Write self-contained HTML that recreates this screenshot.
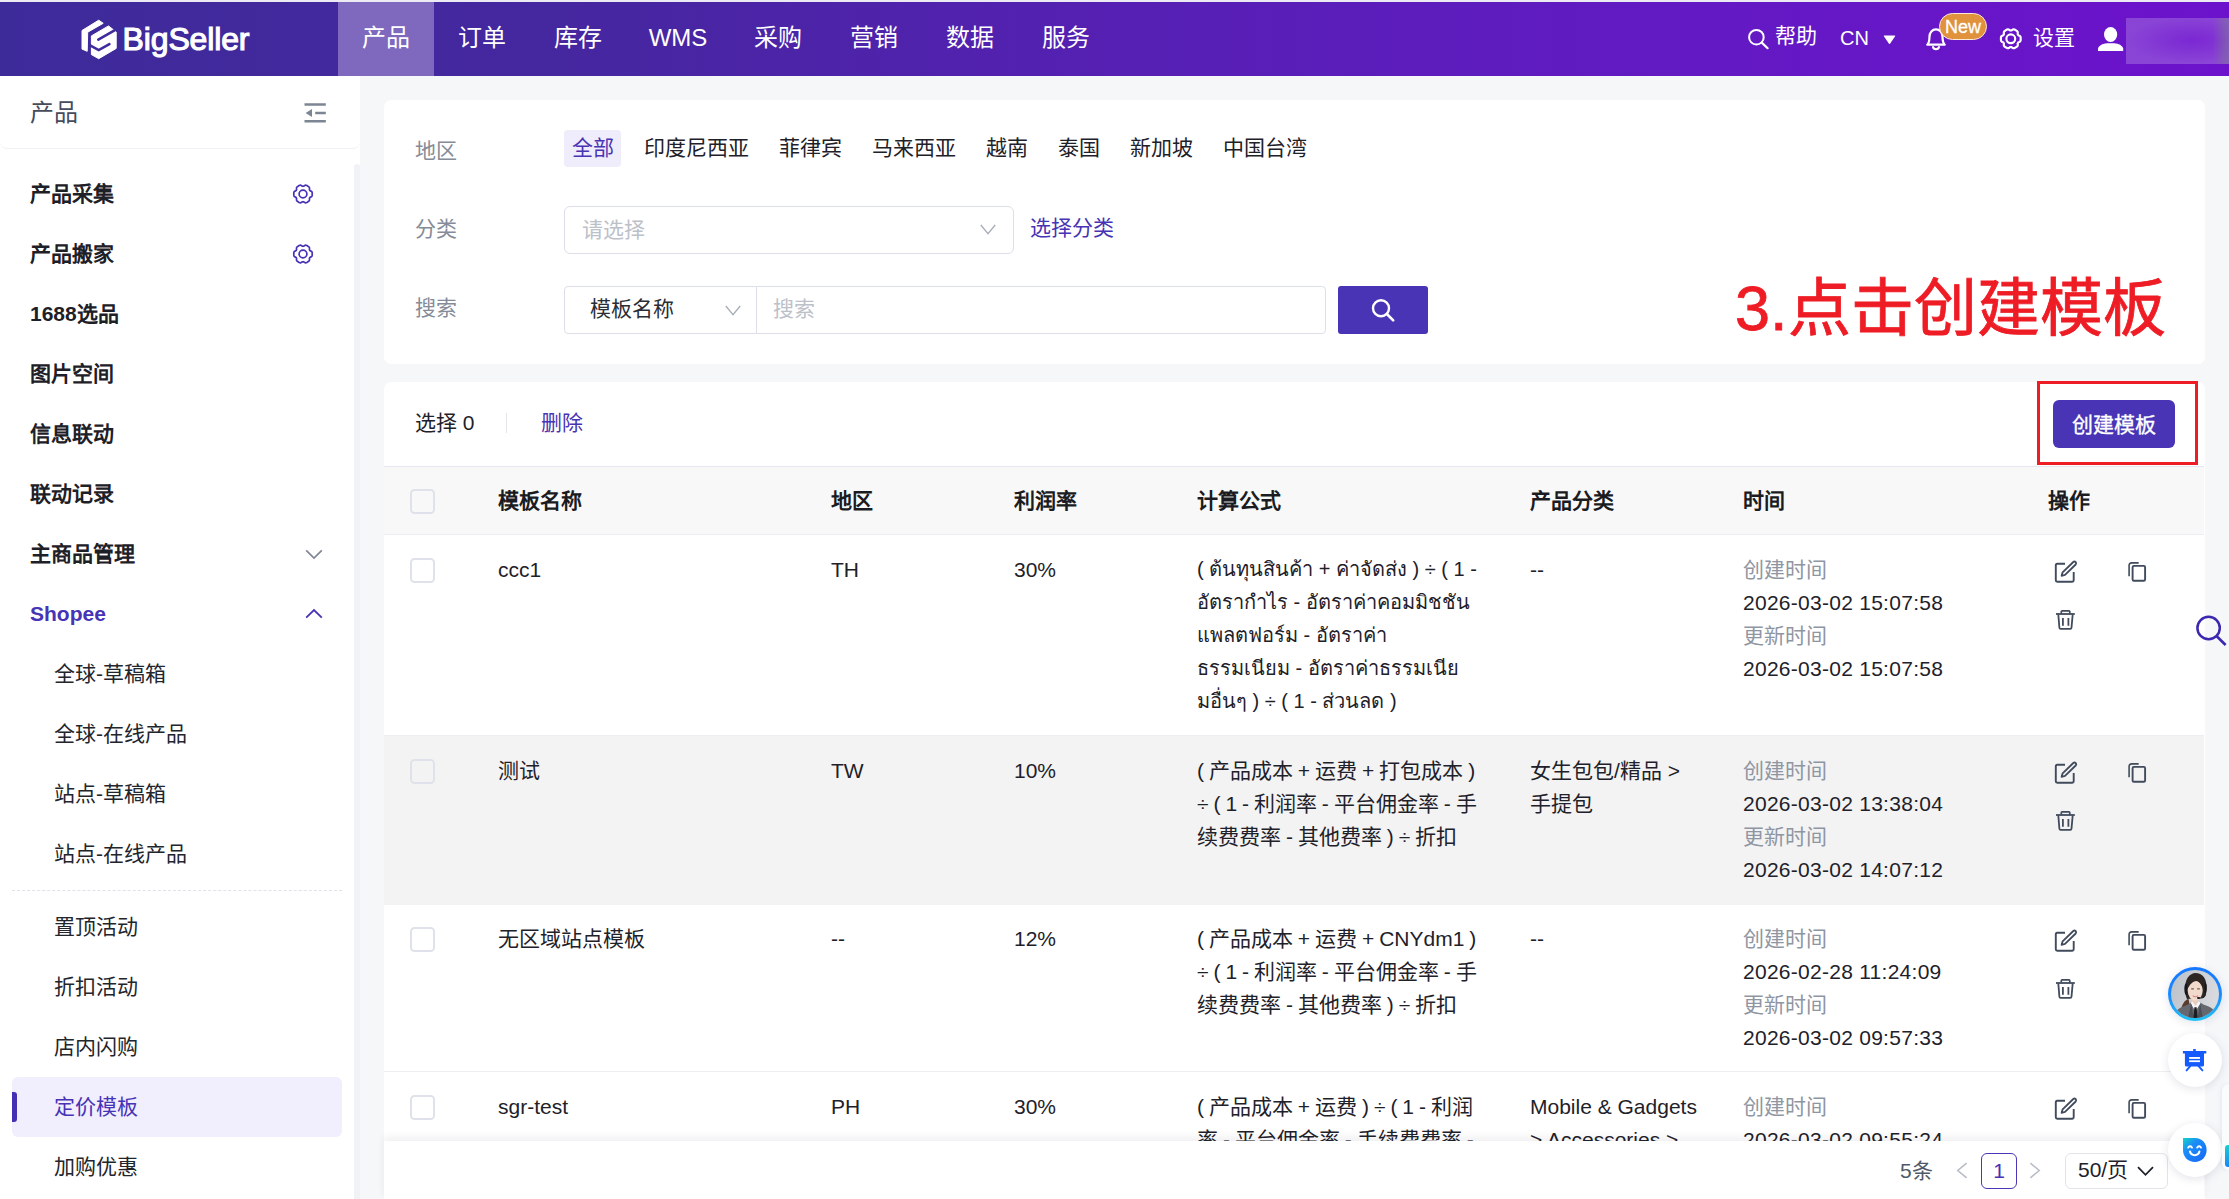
<!DOCTYPE html>
<html lang="zh-CN">
<head>
<meta charset="utf-8">
<title>BigSeller - 定价模板</title>
<style>
*{box-sizing:border-box;margin:0;padding:0}
html,body{width:2229px;height:1199px;overflow:hidden}
body{position:relative;background:#f6f7f9;font-family:"Liberation Sans",sans-serif;font-size:21px;color:#1e2129;line-height:33px}
.abs{position:absolute}
svg{display:block;overflow:visible}
a{text-decoration:none;color:inherit}
ul{list-style:none}

/* ---------- top header ---------- */
#topstrip{position:absolute;left:0;top:0;width:2229px;height:2px;background:#eceaf3}
#hdr{position:absolute;left:0;top:2px;width:2229px;height:74px;background:linear-gradient(90deg,#3e2b9a 0%,#45279f 25%,#5520b3 50%,#621ac3 75%,#6c12cc 100%);color:#fff}
#logo{position:absolute;left:81px;top:17px;width:36px;height:40px}
#logotxt{position:absolute;left:122.6px;top:15.3px;font-size:32px;line-height:44px;letter-spacing:-0.15px;-webkit-text-stroke:1.15px #fff;white-space:nowrap}
#nav a{position:absolute;top:0;height:74px;line-height:72px;font-size:24px;text-align:center;white-space:nowrap;color:#fff}
#nav a.on{background:#7e69be}
.hr{position:absolute;white-space:nowrap;color:#fff;font-size:21px;line-height:30px}

/* ---------- sidebar ---------- */
#side{position:absolute;left:0;top:76px;width:360px;height:1123px;background:#fff}
#sidetrack{position:absolute;left:353.6px;top:164px;width:6.4px;height:1035px;background:#f1f2f5;border-radius:3px 3px 0 0}
#sidehd{position:absolute;left:0;top:76px;width:360px;height:72.5px;background:#fff;border-bottom:1.5px solid #eff1f5;border-radius:0 0 7px 7px}
#sidehd span{position:absolute;left:30px;top:20px;font-size:24px;line-height:34px;color:#464c5b}
.mi{position:absolute;left:30px;font-size:21px;line-height:30px;font-weight:700;color:#1d2027;white-space:nowrap}
.si{position:absolute;left:54px;font-size:21px;line-height:30px;color:#22252c;white-space:nowrap}

/* ---------- panels ---------- */
.panel{position:absolute;left:384px;width:1821px;background:#fff;border-radius:7px}
.lbl{position:absolute;left:31px;font-size:21px;line-height:30px;color:#858b98;white-space:nowrap}
.chip{position:absolute;top:30px;height:37px;line-height:35px;padding:0 7.5px;border-radius:4px;font-size:21px;color:#1e2129;white-space:nowrap}
.chip.on{background:#efecfb;color:#4733b3}
.ibox{position:absolute;height:48px;border:1px solid #dcdfe8;background:#fff;font-size:21px;line-height:46px;white-space:nowrap}
.ph{color:#bcc0c9}

/* ---------- table ---------- */
#tb{position:absolute;left:0;top:84px;width:1820px}
.th{position:absolute;left:0;top:0;width:1820px;height:69px;background:#f8f8f9;border-top:1px solid #e5e7ee;border-bottom:1px solid #eceef1}
.th b{position:absolute;top:19px;font-size:21px;line-height:30px;font-weight:700;color:#1a1c22;white-space:nowrap}
.tr{position:absolute;left:0;width:1820px;border-bottom:1px solid #eceef1;overflow:hidden}
.tr.hov{background:#f3f3f3;border-bottom-color:#f3f3f3}
.td{position:absolute;top:18px;font-size:21px;line-height:33px;white-space:nowrap;color:#1e2129}
.td i{font-style:normal;color:#8f96a3;letter-spacing:0}
.tm{letter-spacing:0.27px}
.cb{position:absolute;left:26px;width:24.5px;height:24.5px;border:2px solid #dfe2ea;border-radius:4.5px;background:transparent}
.ic{position:absolute}
#foot{position:absolute;left:384px;top:1141px;width:1820px;height:58px;background:#fff;box-shadow:0 -4px 8px rgba(40,45,70,.07)}
.fl{position:absolute;border-radius:50%;background:#fff;box-shadow:0 2px 10px rgba(40,50,90,.13)}
</style>
</head>
<body>

<div id="topstrip"></div>

<!-- ================= HEADER ================= -->
<div id="hdr">
  <svg id="logo" viewBox="0 0 36 40">
    <path d="M17.7 1.2 L1 11.5 V30.1 L6.2 32.3 L6.7 13.2 L22.2 4.3 Z" fill="#fff" stroke="#fff" stroke-width="1" stroke-linejoin="round"/>
    <path d="M27.5 6.9 L10.4 16.9 V35.6 L17.7 39.7 L35.2 29.4 V13 Z" fill="#fff" stroke="#fff" stroke-width="1" stroke-linejoin="round"/>
    <path d="M37 9.4 L17.3 20.7" stroke="#3f2b9b" stroke-width="2.6" stroke-linecap="round" fill="none"/>
    <path d="M8.6 26.1 L17.7 31.1 L28.4 25.2" stroke="#3f2b9b" stroke-width="2.6" stroke-linecap="round" stroke-linejoin="miter" fill="none"/>
  </svg>
  <div id="logotxt">BigSeller</div>

  <div id="nav">
    <a class="on" style="left:338px;width:96px">产品</a>
    <a style="left:434px;width:96px">订单</a>
    <a style="left:530px;width:96px">库存</a>
    <a style="left:626px;width:104px">WMS</a>
    <a style="left:730px;width:96px">采购</a>
    <a style="left:826px;width:96px">营销</a>
    <a style="left:922px;width:96px">数据</a>
    <a style="left:1018px;width:96px">服务</a>
  </div>

  <!-- right tools -->
  <svg class="abs" style="left:1746px;top:25px" width="24" height="24" viewBox="0 0 24 24"><circle cx="10.4" cy="10.2" r="7.3" fill="none" stroke="#fff" stroke-width="2"/><path d="M15.8 15.6 L21.6 21.2" stroke="#fff" stroke-width="2.2" stroke-linecap="round"/></svg>
  <div class="hr" style="left:1775px;top:19px">帮助</div>
  <div class="hr" style="left:1840px;top:21px;font-size:20px">CN</div>
  <svg class="abs" style="left:1883px;top:32.6px" width="13" height="10" viewBox="0 0 13 10"><path d="M1.2 0.6 H11.8 Q12.6 0.8 12 1.6 L7 8.8 Q6.5 9.4 6 8.8 L1 1.6 Q0.4 0.8 1.2 0.6 Z" fill="#fff"/></svg>
  <svg class="abs" style="left:1924px;top:24.5px" width="24" height="24" viewBox="0 0 22 22"><path d="M3 16.2 H19 C17.3 14.6 17 13 17 9.2 C17 5 14.4 2.2 11 2.2 C7.6 2.2 5 5 5 9.2 C5 13 4.7 14.6 3 16.2 Z" fill="none" stroke="#fff" stroke-width="2" stroke-linejoin="round"/><path d="M8.3 18.4 C8.8 21 13.2 21 13.7 18.4" fill="none" stroke="#fff" stroke-width="2" stroke-linecap="round"/></svg>
  <div class="abs" style="left:1939px;top:11px;width:48px;height:27px;border-radius:14px;background:#e0923c;border:1px solid #fbe9d6;color:#fff;font-size:18px;line-height:27px;text-align:center;-webkit-text-stroke:0.3px #fff">New</div>
  <svg class="abs" id="hgear" style="left:1999px;top:25px" width="23.6" height="23.6" viewBox="-11 -11 22 22"><path d="M9.2 -0.0L9.2 -0.4L9.2 -0.8L9.2 -1.2L9.1 -1.6L9.0 -2.0L8.8 -2.3L8.4 -2.7L8.0 -2.9L7.5 -3.1L7.1 -3.3L6.8 -3.6L6.7 -3.9L6.5 -4.1L6.4 -4.5L6.5 -5.0L6.5 -5.5L6.5 -6.0L6.4 -6.4L6.2 -6.8L6.0 -7.1L5.6 -7.3L5.3 -7.6L4.9 -7.8L4.6 -8.0L4.3 -8.2L3.9 -8.4L3.5 -8.6L3.2 -8.7L2.8 -8.8L2.3 -8.8L1.9 -8.6L1.5 -8.4L1.1 -8.1L0.7 -7.8L0.3 -7.7L0.0 -7.8L-0.3 -7.7L-0.7 -7.8L-1.1 -8.1L-1.5 -8.4L-1.9 -8.6L-2.3 -8.8L-2.8 -8.8L-3.2 -8.7L-3.5 -8.6L-3.9 -8.4L-4.3 -8.2L-4.6 -8.0L-4.9 -7.8L-5.3 -7.6L-5.6 -7.3L-6.0 -7.1L-6.2 -6.8L-6.4 -6.4L-6.5 -6.0L-6.5 -5.5L-6.5 -5.0L-6.4 -4.5L-6.5 -4.1L-6.7 -3.9L-6.8 -3.6L-7.1 -3.3L-7.5 -3.1L-8.0 -2.9L-8.4 -2.7L-8.8 -2.3L-9.0 -2.0L-9.1 -1.6L-9.2 -1.2L-9.2 -0.8L-9.2 -0.4L-9.2 -0.0L-9.2 0.4L-9.2 0.8L-9.2 1.2L-9.1 1.6L-9.0 2.0L-8.8 2.3L-8.4 2.7L-8.0 2.9L-7.5 3.1L-7.1 3.3L-6.8 3.6L-6.7 3.9L-6.5 4.1L-6.4 4.5L-6.5 5.0L-6.5 5.5L-6.5 6.0L-6.4 6.4L-6.2 6.8L-6.0 7.1L-5.6 7.3L-5.3 7.6L-4.9 7.8L-4.6 8.0L-4.3 8.2L-3.9 8.4L-3.5 8.6L-3.2 8.7L-2.8 8.8L-2.3 8.8L-1.9 8.6L-1.5 8.4L-1.1 8.1L-0.7 7.8L-0.3 7.7L-0.0 7.8L0.3 7.7L0.7 7.8L1.1 8.1L1.5 8.4L1.9 8.6L2.3 8.8L2.8 8.8L3.2 8.7L3.5 8.6L3.9 8.4L4.3 8.2L4.6 8.0L4.9 7.8L5.3 7.6L5.6 7.3L6.0 7.1L6.2 6.8L6.4 6.4L6.5 6.0L6.5 5.5L6.5 5.0L6.4 4.5L6.5 4.1L6.7 3.9L6.8 3.6L7.1 3.3L7.5 3.1L8.0 2.9L8.4 2.7L8.8 2.3L9.0 2.0L9.1 1.6L9.2 1.2L9.2 0.8L9.2 0.4Z" fill="none" stroke="#fff" stroke-width="2" stroke-linejoin="round"/><circle cx="0" cy="0" r="4.1" fill="none" stroke="#fff" stroke-width="2"/></svg>
  <div class="hr" style="left:2033px;top:21px">设置</div>
  <svg class="abs" style="left:2097px;top:24px" width="27" height="26" viewBox="0 0 27 26"><ellipse cx="13.6" cy="8.5" rx="6.6" ry="7.5" fill="#fff"/><path d="M1 25 V22.4 C1.6 19.6 6 17.4 10 17.2 H17.4 C21.4 17.4 25.6 19.6 26.2 22.4 V25 Z" fill="#fff"/></svg>
  <div class="abs" style="left:2126px;top:16px;width:103px;height:46px;background:linear-gradient(90deg,rgba(125,118,150,0) 84%,rgba(125,118,150,.6) 100%),radial-gradient(ellipse 62% 50% at 64% 48%,rgba(112,20,208,.6),rgba(112,20,208,0) 100%),rgba(255,255,255,.21)"></div>
</div>

<!-- ================= SIDEBAR ================= -->
<div id="side"></div>
<div id="sidetrack"></div>
<div id="sidehd">
  <span>产品</span>
  <svg class="abs" style="left:304px;top:27px" width="22" height="20" viewBox="0 0 22 20"><path d="M0.5 1.5 H21.8 M11.2 10 H21.8 M0.5 18.3 H21.8" stroke="#7c8593" stroke-width="2.4" fill="none"/><path d="M1.6 10 L8 5.9 V14.1 Z" fill="#7c8593"/></svg>
</div>

<div id="menu">
  <div class="mi" style="top:179px">产品采集</div>
  <div class="mi" style="top:239px">产品搬家</div>
  <div class="mi" style="top:299px">1688选品</div>
  <div class="mi" style="top:359px">图片空间</div>
  <div class="mi" style="top:419px">信息联动</div>
  <div class="mi" style="top:479px">联动记录</div>
  <div class="mi" style="top:539px">主商品管理</div>
  <div class="mi" style="top:599px;color:#4633b6">Shopee</div>
  <svg class="abs sgear" style="left:292px;top:183px" width="22" height="22" viewBox="-11 -11 22 22"><path d="M9.2 -0.0L9.2 -0.4L9.2 -0.8L9.2 -1.2L9.1 -1.6L9.0 -2.0L8.8 -2.3L8.4 -2.7L8.0 -2.9L7.5 -3.1L7.1 -3.3L6.8 -3.6L6.7 -3.9L6.5 -4.1L6.4 -4.5L6.5 -5.0L6.5 -5.5L6.5 -6.0L6.4 -6.4L6.2 -6.8L6.0 -7.1L5.6 -7.3L5.3 -7.6L4.9 -7.8L4.6 -8.0L4.3 -8.2L3.9 -8.4L3.5 -8.6L3.2 -8.7L2.8 -8.8L2.3 -8.8L1.9 -8.6L1.5 -8.4L1.1 -8.1L0.7 -7.8L0.3 -7.7L0.0 -7.8L-0.3 -7.7L-0.7 -7.8L-1.1 -8.1L-1.5 -8.4L-1.9 -8.6L-2.3 -8.8L-2.8 -8.8L-3.2 -8.7L-3.5 -8.6L-3.9 -8.4L-4.3 -8.2L-4.6 -8.0L-4.9 -7.8L-5.3 -7.6L-5.6 -7.3L-6.0 -7.1L-6.2 -6.8L-6.4 -6.4L-6.5 -6.0L-6.5 -5.5L-6.5 -5.0L-6.4 -4.5L-6.5 -4.1L-6.7 -3.9L-6.8 -3.6L-7.1 -3.3L-7.5 -3.1L-8.0 -2.9L-8.4 -2.7L-8.8 -2.3L-9.0 -2.0L-9.1 -1.6L-9.2 -1.2L-9.2 -0.8L-9.2 -0.4L-9.2 -0.0L-9.2 0.4L-9.2 0.8L-9.2 1.2L-9.1 1.6L-9.0 2.0L-8.8 2.3L-8.4 2.7L-8.0 2.9L-7.5 3.1L-7.1 3.3L-6.8 3.6L-6.7 3.9L-6.5 4.1L-6.4 4.5L-6.5 5.0L-6.5 5.5L-6.5 6.0L-6.4 6.4L-6.2 6.8L-6.0 7.1L-5.6 7.3L-5.3 7.6L-4.9 7.8L-4.6 8.0L-4.3 8.2L-3.9 8.4L-3.5 8.6L-3.2 8.7L-2.8 8.8L-2.3 8.8L-1.9 8.6L-1.5 8.4L-1.1 8.1L-0.7 7.8L-0.3 7.7L-0.0 7.8L0.3 7.7L0.7 7.8L1.1 8.1L1.5 8.4L1.9 8.6L2.3 8.8L2.8 8.8L3.2 8.7L3.5 8.6L3.9 8.4L4.3 8.2L4.6 8.0L4.9 7.8L5.3 7.6L5.6 7.3L6.0 7.1L6.2 6.8L6.4 6.4L6.5 6.0L6.5 5.5L6.5 5.0L6.4 4.5L6.5 4.1L6.7 3.9L6.8 3.6L7.1 3.3L7.5 3.1L8.0 2.9L8.4 2.7L8.8 2.3L9.0 2.0L9.1 1.6L9.2 1.2L9.2 0.8L9.2 0.4Z" fill="none" stroke="#4633b6" stroke-width="1.7" stroke-linejoin="round"/><circle cx="0" cy="0" r="3.9" fill="none" stroke="#4633b6" stroke-width="1.7"/></svg>
  <svg class="abs sgear" style="left:292px;top:243px" width="22" height="22" viewBox="-11 -11 22 22"><path d="M9.2 -0.0L9.2 -0.4L9.2 -0.8L9.2 -1.2L9.1 -1.6L9.0 -2.0L8.8 -2.3L8.4 -2.7L8.0 -2.9L7.5 -3.1L7.1 -3.3L6.8 -3.6L6.7 -3.9L6.5 -4.1L6.4 -4.5L6.5 -5.0L6.5 -5.5L6.5 -6.0L6.4 -6.4L6.2 -6.8L6.0 -7.1L5.6 -7.3L5.3 -7.6L4.9 -7.8L4.6 -8.0L4.3 -8.2L3.9 -8.4L3.5 -8.6L3.2 -8.7L2.8 -8.8L2.3 -8.8L1.9 -8.6L1.5 -8.4L1.1 -8.1L0.7 -7.8L0.3 -7.7L0.0 -7.8L-0.3 -7.7L-0.7 -7.8L-1.1 -8.1L-1.5 -8.4L-1.9 -8.6L-2.3 -8.8L-2.8 -8.8L-3.2 -8.7L-3.5 -8.6L-3.9 -8.4L-4.3 -8.2L-4.6 -8.0L-4.9 -7.8L-5.3 -7.6L-5.6 -7.3L-6.0 -7.1L-6.2 -6.8L-6.4 -6.4L-6.5 -6.0L-6.5 -5.5L-6.5 -5.0L-6.4 -4.5L-6.5 -4.1L-6.7 -3.9L-6.8 -3.6L-7.1 -3.3L-7.5 -3.1L-8.0 -2.9L-8.4 -2.7L-8.8 -2.3L-9.0 -2.0L-9.1 -1.6L-9.2 -1.2L-9.2 -0.8L-9.2 -0.4L-9.2 -0.0L-9.2 0.4L-9.2 0.8L-9.2 1.2L-9.1 1.6L-9.0 2.0L-8.8 2.3L-8.4 2.7L-8.0 2.9L-7.5 3.1L-7.1 3.3L-6.8 3.6L-6.7 3.9L-6.5 4.1L-6.4 4.5L-6.5 5.0L-6.5 5.5L-6.5 6.0L-6.4 6.4L-6.2 6.8L-6.0 7.1L-5.6 7.3L-5.3 7.6L-4.9 7.8L-4.6 8.0L-4.3 8.2L-3.9 8.4L-3.5 8.6L-3.2 8.7L-2.8 8.8L-2.3 8.8L-1.9 8.6L-1.5 8.4L-1.1 8.1L-0.7 7.8L-0.3 7.7L-0.0 7.8L0.3 7.7L0.7 7.8L1.1 8.1L1.5 8.4L1.9 8.6L2.3 8.8L2.8 8.8L3.2 8.7L3.5 8.6L3.9 8.4L4.3 8.2L4.6 8.0L4.9 7.8L5.3 7.6L5.6 7.3L6.0 7.1L6.2 6.8L6.4 6.4L6.5 6.0L6.5 5.5L6.5 5.0L6.4 4.5L6.5 4.1L6.7 3.9L6.8 3.6L7.1 3.3L7.5 3.1L8.0 2.9L8.4 2.7L8.8 2.3L9.0 2.0L9.1 1.6L9.2 1.2L9.2 0.8L9.2 0.4Z" fill="none" stroke="#4633b6" stroke-width="1.7" stroke-linejoin="round"/><circle cx="0" cy="0" r="3.9" fill="none" stroke="#4633b6" stroke-width="1.7"/></svg>
  <svg class="abs" style="left:304.5px;top:549px" width="18" height="11" viewBox="0 0 18 11"><path d="M1.2 1.4 L9 9 L16.8 1.4" fill="none" stroke="#7f8795" stroke-width="1.7"/></svg>
  <svg class="abs" style="left:304.5px;top:608px" width="18" height="11" viewBox="0 0 18 11"><path d="M1.2 9.6 L9 2 L16.8 9.6" fill="none" stroke="#4633b6" stroke-width="1.8"/></svg>

  <div class="si" style="top:659px">全球-草稿箱</div>
  <div class="si" style="top:719px">全球-在线产品</div>
  <div class="si" style="top:779px">站点-草稿箱</div>
  <div class="si" style="top:839px">站点-在线产品</div>
  <div class="abs" style="left:12px;top:890px;width:330px;height:0;border-top:1px dashed #dfe2e8"></div>
  <div class="si" style="top:912px">置顶活动</div>
  <div class="si" style="top:972px">折扣活动</div>
  <div class="si" style="top:1032px">店内闪购</div>
  <div class="abs" style="left:12px;top:1077px;width:330px;height:60px;background:#f1eefd;border-radius:6px"></div>
  <div class="abs" style="left:12px;top:1092px;width:5px;height:30px;background:#4530b4;border-radius:0 3px 3px 0"></div>
  <div class="si" style="top:1092px;color:#4633b6">定价模板</div>
  <div class="si" style="top:1152px">加购优惠</div>
</div>

<!-- ================= FILTER PANEL ================= -->
<div class="panel" id="filter" style="top:100px;height:264px">
  <div class="lbl" style="top:36px">地区</div>
  <div class="chip on" style="left:180px">全部</div>
  <div class="chip" style="left:252.5px">印度尼西亚</div>
  <div class="chip" style="left:387.5px">菲律宾</div>
  <div class="chip" style="left:480.5px">马来西亚</div>
  <div class="chip" style="left:594.5px">越南</div>
  <div class="chip" style="left:666.5px">泰国</div>
  <div class="chip" style="left:738.5px">新加坡</div>
  <div class="chip" style="left:831.5px">中国台湾</div>

  <div class="lbl" style="top:114px">分类</div>
  <div class="ibox" style="left:180px;top:106px;width:450px;border-radius:6px;padding-left:17px"><span class="ph">请选择</span></div>
  <svg class="abs" style="left:596px;top:124px" width="16" height="11" viewBox="0 0 16 11"><path d="M0.8 1 L8 9.6 L15.2 1" fill="none" stroke="#a9aeb9" stroke-width="1.4"/></svg>
  <div class="abs" style="left:646px;top:113px;font-size:21px;line-height:30px;color:#4733b3;white-space:nowrap">选择分类</div>

  <div class="lbl" style="top:193px">搜索</div>
  <div class="ibox" style="left:180px;top:186px;width:193px;border-radius:4px 0 0 4px;padding-left:25px;color:#2a2e36;line-height:43px">模板名称</div>
  <svg class="abs" style="left:341px;top:205px" width="16" height="11" viewBox="0 0 16 11"><path d="M0.8 1 L8 9.6 L15.2 1" fill="none" stroke="#a9aeb9" stroke-width="1.4"/></svg>
  <div class="ibox" style="left:372px;top:186px;width:570px;border-radius:0 4px 4px 0;padding-left:16px;line-height:43px"><span class="ph">搜索</span></div>
  <div class="abs" style="left:954px;top:186px;width:90px;height:48px;background:#4834b4;border-radius:3px"></div>
  <svg class="abs" style="left:986px;top:197px" width="26" height="26" viewBox="0 0 26 26"><circle cx="11" cy="11.2" r="8" fill="none" stroke="#fff" stroke-width="2.4"/><path d="M16.9 17 L23.2 23.4" stroke="#fff" stroke-width="2.6" stroke-linecap="round"/></svg>

  <div class="abs" id="anno" style="left:1351px;top:166px;font-size:63px;line-height:84px;color:#ee1c25;white-space:nowrap;-webkit-text-stroke:0.8px #ee1c25">3.点击创建模板</div>
</div>

<!-- ================= TABLE PANEL ================= -->
<div class="panel" id="list" style="top:382px;height:817px;border-radius:7px 7px 0 0;overflow:hidden">
  <div class="abs" style="left:31px;top:26px;font-size:21px;line-height:30px;white-space:nowrap">选择 0</div>
  <div class="abs" style="left:122px;top:31px;width:1px;height:20px;background:#e3e5ea"></div>
  <div class="abs" style="left:157px;top:26px;font-size:21px;line-height:30px;color:#4733b3;white-space:nowrap">删除</div>
  <div class="abs" style="left:1669px;top:18px;width:122px;height:48px;border-radius:6px;background:#4834b4;color:#fff;font-size:21px;line-height:50px;text-align:center;white-space:nowrap;-webkit-text-stroke:0.35px #fff">创建模板</div>
  <div id="tb">
  <div class="th">
    <div class="cb" style="top:22px"></div>
    <b style="left:114px">模板名称</b>
    <b style="left:447px">地区</b>
    <b style="left:630px">利润率</b>
    <b style="left:813px">计算公式</b>
    <b style="left:1146px">产品分类</b>
    <b style="left:1359px">时间</b>
    <b style="left:1664px">操作</b>
  </div>
  <div class="tr" style="top:69px;height:201px">
    <div class="cb" style="top:23px"></div>
    <div class="td" style="left:114px">ccc1</div>
    <div class="td" style="left:447px">TH</div>
    <div class="td" style="left:630px">30%</div>
    <div class="td" style="left:813px;font-size:20px">( ต้นทุนสินค้า + ค่าจัดส่ง ) ÷ ( 1 -<br>อัตรากำไร - อัตราค่าคอมมิชชัน<br>แพลตฟอร์ม - อัตราค่า<br>ธรรมเนียม - อัตราค่าธรรมเนีย<br>มอื่นๆ ) ÷ ( 1 - ส่วนลด )</div>
    <div class="td" style="left:1146px">--</div>
    <div class="td tm" style="left:1359px"><i>创建时间</i><br>2026-03-02 15:07:58<br><i>更新时间</i><br>2026-03-02 15:07:58</div>
    <svg class="ic" style="left:1670px;top:25px" width="24" height="24" viewBox="0 0 24 24"><path d="M11 3.8 H3.2 Q1.8 3.8 1.8 5.2 V20.3 Q1.8 21.7 3.2 21.7 H18.3 Q19.7 21.7 19.7 20.3 V12" fill="none" stroke="#414b5c" stroke-width="1.9"/><path d="M7.6 15.8 L8.6 12.3 L19.3 2 Q20.6 1 21.7 2.2 Q22.7 3.4 21.7 4.5 L11 14.9 Z" fill="none" stroke="#414b5c" stroke-width="1.8" stroke-linejoin="round"/></svg>
    <svg class="ic" style="left:1742px;top:25px" width="24" height="24" viewBox="0 0 24 24"><rect x="6.6" y="5.9" width="12.5" height="14.9" rx="1.3" fill="none" stroke="#414b5c" stroke-width="1.9"/><path d="M12.7 2.9 H5.8 Q3.1 2.9 3.1 5.6 V16.2" fill="none" stroke="#414b5c" stroke-width="1.6"/></svg>
    <svg class="ic" style="left:1670px;top:73px" width="24" height="24" viewBox="0 0 24 24"><path d="M2 6 H20.8" stroke="#414b5c" stroke-width="1.8" fill="none"/><path d="M7.3 5.8 V3.7 Q7.3 2.8 8.2 2.8 H14.9 Q15.8 2.8 15.8 3.7 V5.8" fill="none" stroke="#414b5c" stroke-width="1.7"/><path d="M4.3 6.4 L5.4 19.7 Q5.5 20.8 6.6 20.8 H16.3 Q17.4 20.8 17.5 19.7 L18.7 6.4" fill="none" stroke="#414b5c" stroke-width="1.8"/><path d="M8.9 10 V17.8 M14.4 10 V17.8" stroke="#414b5c" stroke-width="1.8" fill="none"/></svg>
  </div>
  <div class="tr hov" style="top:270px;height:169px">
    <div class="cb" style="top:23px"></div>
    <div class="td" style="left:114px">测试</div>
    <div class="td" style="left:447px">TW</div>
    <div class="td" style="left:630px">10%</div>
    <div class="td" style="left:813px;word-spacing:-0.9px">( 产品成本 + 运费 + 打包成本 )<br>÷ ( 1 - 利润率 - 平台佣金率 - 手<br>续费费率 - 其他费率 ) ÷ 折扣</div>
    <div class="td" style="left:1146px">女生包包/精品 &gt;<br>手提包</div>
    <div class="td tm" style="left:1359px"><i>创建时间</i><br>2026-03-02 13:38:04<br><i>更新时间</i><br>2026-03-02 14:07:12</div>
    <svg class="ic" style="left:1670px;top:25px" width="24" height="24" viewBox="0 0 24 24"><path d="M11 3.8 H3.2 Q1.8 3.8 1.8 5.2 V20.3 Q1.8 21.7 3.2 21.7 H18.3 Q19.7 21.7 19.7 20.3 V12" fill="none" stroke="#414b5c" stroke-width="1.9"/><path d="M7.6 15.8 L8.6 12.3 L19.3 2 Q20.6 1 21.7 2.2 Q22.7 3.4 21.7 4.5 L11 14.9 Z" fill="none" stroke="#414b5c" stroke-width="1.8" stroke-linejoin="round"/></svg>
    <svg class="ic" style="left:1742px;top:25px" width="24" height="24" viewBox="0 0 24 24"><rect x="6.6" y="5.9" width="12.5" height="14.9" rx="1.3" fill="none" stroke="#414b5c" stroke-width="1.9"/><path d="M12.7 2.9 H5.8 Q3.1 2.9 3.1 5.6 V16.2" fill="none" stroke="#414b5c" stroke-width="1.6"/></svg>
    <svg class="ic" style="left:1670px;top:73px" width="24" height="24" viewBox="0 0 24 24"><path d="M2 6 H20.8" stroke="#414b5c" stroke-width="1.8" fill="none"/><path d="M7.3 5.8 V3.7 Q7.3 2.8 8.2 2.8 H14.9 Q15.8 2.8 15.8 3.7 V5.8" fill="none" stroke="#414b5c" stroke-width="1.7"/><path d="M4.3 6.4 L5.4 19.7 Q5.5 20.8 6.6 20.8 H16.3 Q17.4 20.8 17.5 19.7 L18.7 6.4" fill="none" stroke="#414b5c" stroke-width="1.8"/><path d="M8.9 10 V17.8 M14.4 10 V17.8" stroke="#414b5c" stroke-width="1.8" fill="none"/></svg>
  </div>
  <div class="tr" style="top:438px;height:168px">
    <div class="cb" style="top:23px"></div>
    <div class="td" style="left:114px">无区域站点模板</div>
    <div class="td" style="left:447px">--</div>
    <div class="td" style="left:630px">12%</div>
    <div class="td" style="left:813px;word-spacing:-0.9px">( 产品成本 + 运费 + CNYdm1 )<br>÷ ( 1 - 利润率 - 平台佣金率 - 手<br>续费费率 - 其他费率 ) ÷ 折扣</div>
    <div class="td" style="left:1146px">--</div>
    <div class="td tm" style="left:1359px"><i>创建时间</i><br>2026-02-28 11:24:09<br><i>更新时间</i><br>2026-03-02 09:57:33</div>
    <svg class="ic" style="left:1670px;top:25px" width="24" height="24" viewBox="0 0 24 24"><path d="M11 3.8 H3.2 Q1.8 3.8 1.8 5.2 V20.3 Q1.8 21.7 3.2 21.7 H18.3 Q19.7 21.7 19.7 20.3 V12" fill="none" stroke="#414b5c" stroke-width="1.9"/><path d="M7.6 15.8 L8.6 12.3 L19.3 2 Q20.6 1 21.7 2.2 Q22.7 3.4 21.7 4.5 L11 14.9 Z" fill="none" stroke="#414b5c" stroke-width="1.8" stroke-linejoin="round"/></svg>
    <svg class="ic" style="left:1742px;top:25px" width="24" height="24" viewBox="0 0 24 24"><rect x="6.6" y="5.9" width="12.5" height="14.9" rx="1.3" fill="none" stroke="#414b5c" stroke-width="1.9"/><path d="M12.7 2.9 H5.8 Q3.1 2.9 3.1 5.6 V16.2" fill="none" stroke="#414b5c" stroke-width="1.6"/></svg>
    <svg class="ic" style="left:1670px;top:73px" width="24" height="24" viewBox="0 0 24 24"><path d="M2 6 H20.8" stroke="#414b5c" stroke-width="1.8" fill="none"/><path d="M7.3 5.8 V3.7 Q7.3 2.8 8.2 2.8 H14.9 Q15.8 2.8 15.8 3.7 V5.8" fill="none" stroke="#414b5c" stroke-width="1.7"/><path d="M4.3 6.4 L5.4 19.7 Q5.5 20.8 6.6 20.8 H16.3 Q17.4 20.8 17.5 19.7 L18.7 6.4" fill="none" stroke="#414b5c" stroke-width="1.8"/><path d="M8.9 10 V17.8 M14.4 10 V17.8" stroke="#414b5c" stroke-width="1.8" fill="none"/></svg>
  </div>
  <div class="tr" style="top:606px;height:200px">
    <div class="cb" style="top:23px"></div>
    <div class="td" style="left:114px">sgr-test</div>
    <div class="td" style="left:447px">PH</div>
    <div class="td" style="left:630px">30%</div>
    <div class="td" style="left:813px;word-spacing:-0.9px">( 产品成本 + 运费 ) ÷ ( 1 - 利润<br>率 - 平台佣金率 - 手续费费率 -<br>其他费率 ) ÷ 折扣</div>
    <div class="td" style="left:1146px">Mobile &amp; Gadgets<br>&gt; Accessories &gt;<br>Cables</div>
    <div class="td tm" style="left:1359px"><i>创建时间</i><br>2026-03-02 09:55:24<br><i>更新时间</i><br>2026-03-02 09:55:24</div>
    <svg class="ic" style="left:1670px;top:25px" width="24" height="24" viewBox="0 0 24 24"><path d="M11 3.8 H3.2 Q1.8 3.8 1.8 5.2 V20.3 Q1.8 21.7 3.2 21.7 H18.3 Q19.7 21.7 19.7 20.3 V12" fill="none" stroke="#414b5c" stroke-width="1.9"/><path d="M7.6 15.8 L8.6 12.3 L19.3 2 Q20.6 1 21.7 2.2 Q22.7 3.4 21.7 4.5 L11 14.9 Z" fill="none" stroke="#414b5c" stroke-width="1.8" stroke-linejoin="round"/></svg>
    <svg class="ic" style="left:1742px;top:25px" width="24" height="24" viewBox="0 0 24 24"><rect x="6.6" y="5.9" width="12.5" height="14.9" rx="1.3" fill="none" stroke="#414b5c" stroke-width="1.9"/><path d="M12.7 2.9 H5.8 Q3.1 2.9 3.1 5.6 V16.2" fill="none" stroke="#414b5c" stroke-width="1.6"/></svg>
    <svg class="ic" style="left:1670px;top:73px" width="24" height="24" viewBox="0 0 24 24"><path d="M2 6 H20.8" stroke="#414b5c" stroke-width="1.8" fill="none"/><path d="M7.3 5.8 V3.7 Q7.3 2.8 8.2 2.8 H14.9 Q15.8 2.8 15.8 3.7 V5.8" fill="none" stroke="#414b5c" stroke-width="1.7"/><path d="M4.3 6.4 L5.4 19.7 Q5.5 20.8 6.6 20.8 H16.3 Q17.4 20.8 17.5 19.7 L18.7 6.4" fill="none" stroke="#414b5c" stroke-width="1.8"/><path d="M8.9 10 V17.8 M14.4 10 V17.8" stroke="#414b5c" stroke-width="1.8" fill="none"/></svg>
  </div>
  </div>
</div>


<!-- red annotation box around the create button -->
<div class="abs" style="left:2037px;top:381px;width:161px;height:84px;border:3px solid #ee1c25"></div>

<!-- ================= FOOTER / PAGINATION ================= -->
<div id="foot">
  <div class="abs" style="left:1516px;top:15px;font-size:21px;line-height:30px;color:#515969;white-space:nowrap">5条</div>
  <svg class="abs" style="left:1572px;top:21px" width="12" height="17" viewBox="0 0 12 17"><path d="M10.6 1.2 L1.8 8.5 L10.6 15.8" fill="none" stroke="#b9bdc7" stroke-width="1.6"/></svg>
  <div class="abs" style="left:1597px;top:12px;width:36px;height:36px;border:1.5px solid #4a36b6;border-radius:6px;color:#4733b3;font-size:21px;line-height:33px;text-align:center">1</div>
  <svg class="abs" style="left:1645px;top:21px" width="12" height="17" viewBox="0 0 12 17"><path d="M1.4 1.2 L10.2 8.5 L1.4 15.8" fill="none" stroke="#b9bdc7" stroke-width="1.6"/></svg>
  <div class="abs" style="left:1681px;top:12px;width:103px;height:36px;border:1px solid #e2e4ea;border-radius:6px;background:#fff"></div>
  <div class="abs" style="left:1694px;top:14px;font-size:21px;line-height:30px;color:#1e2129;white-space:nowrap">50/页</div>
  <svg class="abs" style="left:1753px;top:25px" width="17" height="11" viewBox="0 0 17 11"><path d="M1 1.2 L8.5 8.8 L16 1.2" fill="none" stroke="#1e2129" stroke-width="1.8"/></svg>
</div>

<!-- ================= FLOATING WIDGETS ================= -->
<svg class="abs" style="left:2194px;top:614px" width="35" height="35" viewBox="0 0 35 35"><circle cx="14.6" cy="14" r="11.2" fill="none" stroke="#3c28b0" stroke-width="2.5"/><path d="M22.5 22 L31.6 31" stroke="#3c28b0" stroke-width="2.6" fill="none"/></svg>

<!-- customer-service avatar -->
<div class="fl" style="left:2168px;top:967px;width:54px;height:54px;background:linear-gradient(180deg,#1677ff 0%,#1a8cff 55%,#22c3f5 100%)"></div>
<svg class="abs" style="left:2171px;top:970px" width="48" height="48" viewBox="0 0 48 48">
  <defs><clipPath id="avc"><circle cx="24" cy="24" r="24"/></clipPath><linearGradient id="avbg" x1="0" y1="0" x2="1" y2="0.3"><stop offset="0" stop-color="#bcc0c8"/><stop offset="1" stop-color="#d8dade"/></linearGradient></defs>
  <g clip-path="url(#avc)">
    <rect width="48" height="48" fill="url(#avbg)"/>
    <path d="M10.5 44 C9 38 12 31 17.5 28.5 L19.5 40 Z" fill="#5a3b2c"/>
    <path d="M14.2 21 C13 9 19 3 24.5 3 C31 3 36.5 8.5 35.3 19 C35 23 34.4 25.6 33 27.5 L16 29 C14.8 26.5 14.4 24 14.2 21 Z" fill="#2d2623"/>
    <path d="M21 29 H27.4 V35 H21 Z" fill="#e8cdbd"/>
    <ellipse cx="24.2" cy="20.6" rx="7.5" ry="10.2" fill="#f1d9cb"/>
    <path d="M16.5 19 C16.5 10.5 21 7.2 25 7.4 C30 7.6 32.6 11.5 32.2 18.5 C30.5 14.5 28.5 11.5 25.5 11 C21.5 11.5 18.8 14.5 16.5 19 Z" fill="#2d2623"/>
    <path d="M20.2 18.9 h2.6 M26.2 18.9 h2.6" stroke="#4a3a34" stroke-width="1" fill="none"/>
    <path d="M21.8 25.6 C23.2 27 25.6 27 27 25.6" stroke="#d9808a" stroke-width="1.1" fill="none"/>
    <path d="M2 48 C3 40.5 9 37.6 17 34.6 L20 32.6 L24.4 40.5 L29.4 32.6 L32.4 34.4 C40 37 45.6 40 46.6 48 Z" fill="#66686f"/>
    <path d="M19.6 33 L24.4 41.5 L29.6 33 L27.6 31.6 L24.4 36 L21.4 31.6 Z" fill="#f6f6f8"/>
    <path d="M20.2 33.2 L22.6 48 H17 Z M29.2 33.2 L26.6 48 H32 Z" fill="#4d4f56"/>
    <path d="M23.4 37.2 H25.6 L26.6 48 H22.4 Z" fill="#1c1d22"/>
    <path d="M13.4 20 C13.2 14.5 14.4 13.4 16 13.6 V25 C14.4 25 13.6 24 13.4 20 Z M35.8 19 C36 14 35 12.8 33.6 13 V24 C35 24 35.6 23 35.8 19 Z" fill="#17171b"/>
    <path d="M34.6 23.6 C34.8 26.8 32 28.4 28.6 28" fill="none" stroke="#17171b" stroke-width="1"/>
    <ellipse cx="27.6" cy="27.9" rx="1.7" ry="1" fill="#17171b"/>
  </g>
</svg>

<div class="fl" style="left:2168px;top:1033px;width:54px;height:54px"></div>
<svg class="abs" style="left:2182px;top:1048px" width="26" height="24" viewBox="0 0 26 24"><path d="M0.9 3.1 H24.3 V5.5 H22 V17 Q22 18.6 20.4 18.6 H4.5 Q2.9 18.6 2.9 17 V5.5 H0.9 Z" fill="#145afc"/><rect x="11.2" y="1" width="2.6" height="2.6" fill="#145afc"/><path d="M8.2 18.2 L4.6 22.4 M16.6 18.2 L20.4 22.4" stroke="#145afc" stroke-width="1.9" stroke-linecap="round" fill="none"/><rect x="7.1" y="9" width="10.9" height="1.9" fill="#fff"/><rect x="7.1" y="12.3" width="10.9" height="1.8" fill="#fff"/></svg>

<div class="fl" style="left:2168px;top:1123px;width:54px;height:54px"></div>
<svg class="abs" style="left:2183px;top:1138px" width="24" height="24" viewBox="0 0 24 24">
  <defs><linearGradient id="botg" x1="0" y1="0" x2="0.9" y2="1"><stop offset="0" stop-color="#12d6c4"/><stop offset="0.35" stop-color="#1b8ef8"/><stop offset="1" stop-color="#1668f6"/></linearGradient></defs>
  <path d="M0 0 H12 C19 0 23.6 5 23.6 12 C23.6 19 18.6 24 11.8 24 C5 24 0 19 0 12 Z" fill="url(#botg)"/>
  <path d="M7 13.6 C8.2 18.4 15.2 18.4 16.4 13.6" fill="none" stroke="#fff" stroke-width="2.1" stroke-linecap="round"/>
  <path d="M5.2 9.6 C6 7.8 8.2 7.8 9 9.6 M14.2 9.6 C15 7.8 17.2 7.8 18 9.6" fill="none" stroke="#fff" stroke-width="1.9" stroke-linecap="round"/>
</svg>
<div class="abs" style="left:2222px;top:1084px;width:7px;height:86px;background:#fafbfd;border-radius:7px 0 0 7px;box-shadow:-1px 0 5px rgba(40,50,90,.08)"></div>
<div class="abs" style="left:2224.5px;top:1145px;width:5px;height:22px;background:linear-gradient(180deg,#18cfd0,#1b86f5);border-radius:3px 0 0 3px"></div>
</body>
</html>
